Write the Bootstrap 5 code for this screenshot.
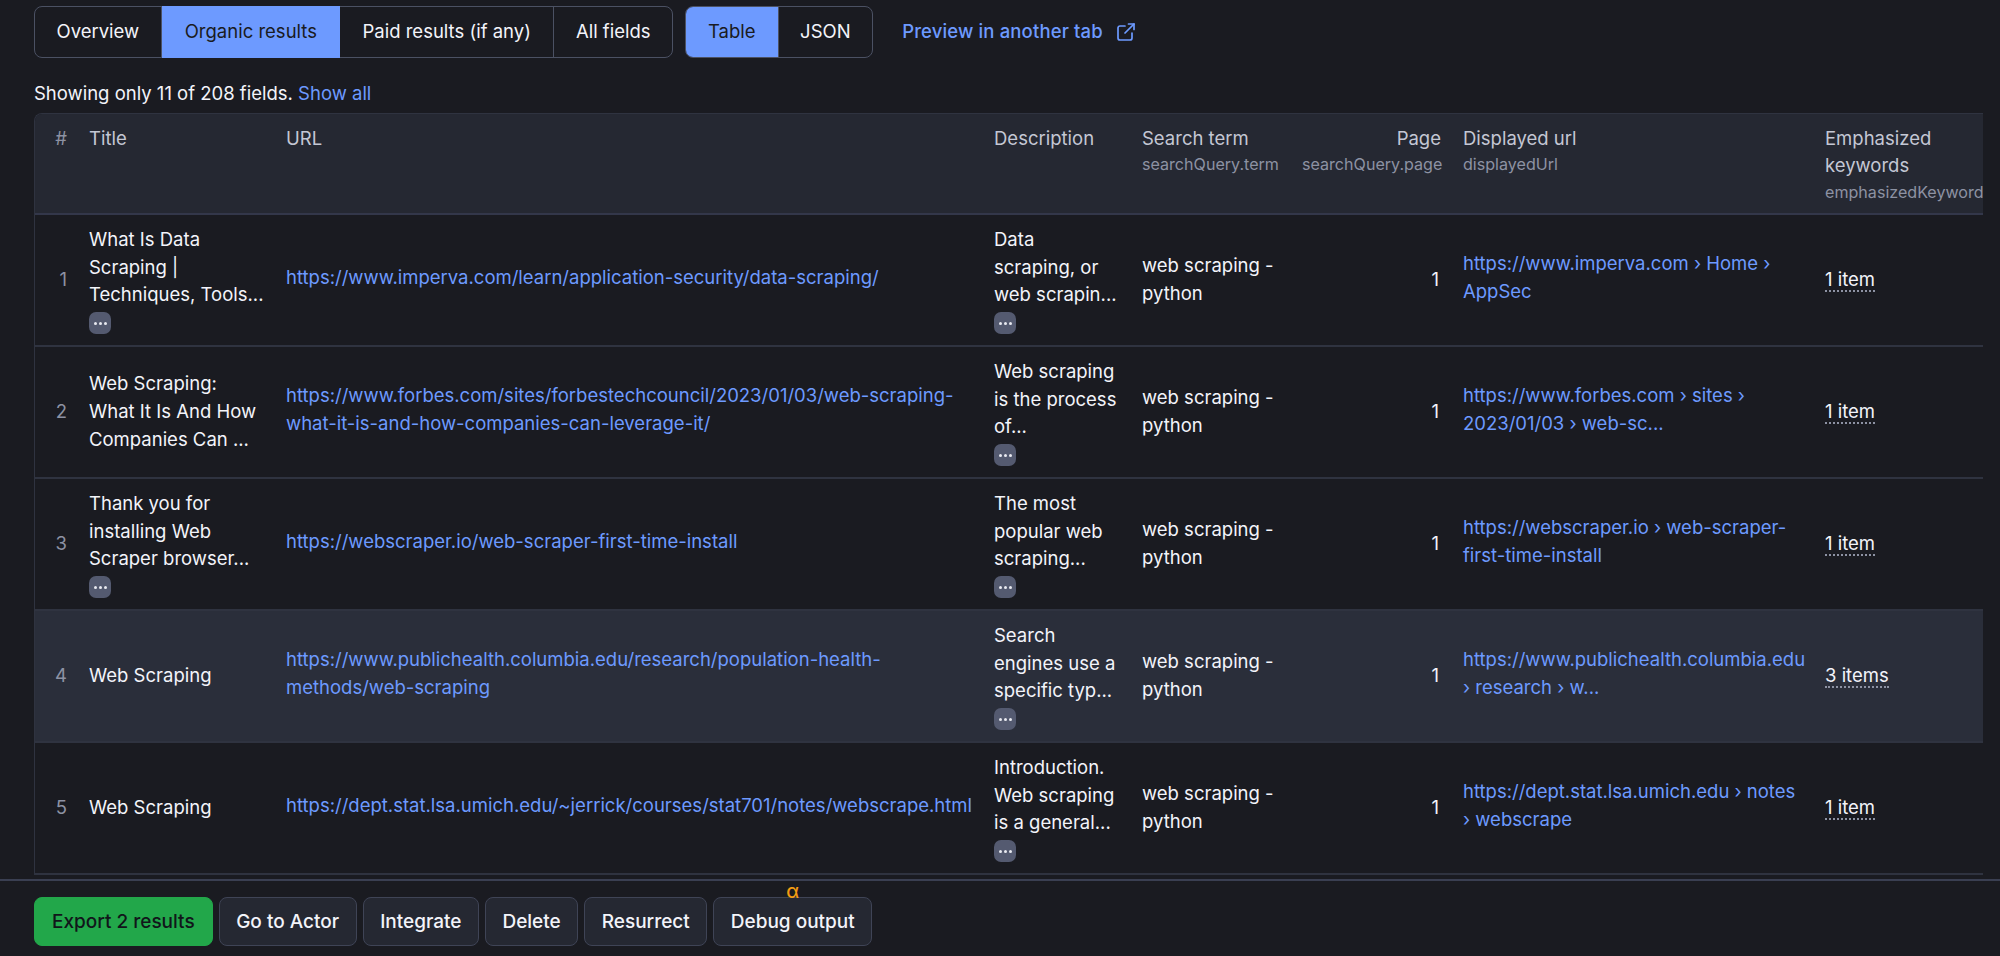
<!DOCTYPE html>
<html lang="en"><head><meta charset="utf-8"><title>Results</title>
<link rel="stylesheet" href="https://cdn.jsdelivr.net/npm/bootstrap@5.3.0/dist/css/bootstrap.min.css">
<style>
html,body{height:100%;overflow:hidden}
body{background:#1a1b21;color:#f3f4fa;font-family:Inter,"Liberation Sans",sans-serif;font-size:18.5px;line-height:27.75px}
a{color:#6d9aff;text-decoration:none}
.shell{height:956px}
.main-area{padding:6px 17px 0 34px;min-height:0}
.seg{border:1px solid #4b5163;border-radius:8px;height:52px;background:#1a1b21}
.seg-second{overflow:hidden;margin-left:12px}
.seg-btn{padding:0 21.5px;display:flex;align-items:center;border-right:1px solid #4b5163;color:#f3f4fa}
.seg-btn:last-child{border-right:0}
.seg-btn.on{background:#6d9aff;color:#1a1b21}
.seg-first .seg-btn.on{margin:-1px 0;border-right:0;padding:0 23px}
.seg-first .seg-btn:nth-child(3){padding:0 22.5px}
.seg-second .seg-btn.on{padding:0 22px}
.preview{font-weight:500;margin-left:29px;gap:14px;letter-spacing:.14px}
.fields-note{margin-top:22px;height:28px;margin-bottom:5px}
.tbl-wrap{border:1px solid #2f3340;border-bottom:0;border-right:0;border-radius:8px 0 0 0;overflow:hidden;width:1949px}
.dtable{table-layout:fixed;border-collapse:collapse;width:2200px;color:#f3f4fa}
.dtable th{background:#252832;color:#c4c7d4;font-weight:400;vertical-align:top;padding:10.5px 11px 9px;border-bottom:2px solid #33374a}
.dtable td{height:132px;vertical-align:middle;padding:10px 11px;border-bottom:2px solid #2f3340}
.dtable tr.hover td{background:#2a2e3a}
.fieldkey{display:block;font-size:16.1px;line-height:24px;color:#8d92a3;white-space:nowrap}
.idx{color:#8d92a3;text-align:right;padding-left:0!important;padding-right:11px!important}
.dtable th.idx{color:#8d92a3}
.num{text-align:right}
.dtable td.num{padding-right:13px}
.cell-link{display:block;margin-bottom:5px}
.more{display:flex;align-items:center;justify-content:center;width:22px;height:22px;border-radius:7px;background:#545a70;margin-top:3px}
.more i{display:block;width:3px;height:3px;border-radius:50%;background:#e8e9f0;margin:0 1px}
.items{border-bottom:2px dotted #8d92a3;line-height:22px;display:inline-block}
.footbar{height:77px;border-top:2px solid #3a3f52;padding:16px 34px 0;gap:6px;position:relative;background:#1a1b21;flex:none}
.acts{height:49px;padding:0 16.5px;display:flex;align-items:center;border:1px solid #3f4456;border-radius:8px;background:#252832;color:#f3f4fa;font-weight:500;font-size:19px}
.acts.go{background:#22a74a;border-color:#22a74a;color:#11161a;padding:0 17px}
.alpha-wrap{position:relative}
.alpha{position:absolute;top:-15.5px;left:50%;transform:translateX(-50%);color:#f39c12;font-size:19px;font-weight:500;line-height:20px}
</style></head>
<body>
<div class="shell d-flex flex-column">
<div class="main-area flex-grow-1 overflow-hidden">
 <div class="d-flex align-items-center">
  <div class="seg seg-first d-flex"><span class="seg-btn">Overview</span><span class="seg-btn on">Organic results</span><span class="seg-btn">Paid results (if any)</span><span class="seg-btn">All fields</span></div>
  <div class="seg d-flex seg-second"><span class="seg-btn on">Table</span><span class="seg-btn">JSON</span></div>
  <a href="#" class="preview d-flex align-items-center">Preview in another tab
   <svg width="18" height="18" viewBox="0 0 18 18" fill="none" stroke="#6d9aff" stroke-width="1.7" stroke-linecap="round" stroke-linejoin="round"><path d="M8 3H3a2 2 0 0 0-2 2v10a2 2 0 0 0 2 2h10a2 2 0 0 0 2-2v-5"/><path d="M11.500 1H17V6.500"/><path d="M17 1 8 10"/></svg></a>
 </div>
 <div class="fields-note">Showing only 11 of 208 fields. <a href="#">Show all</a></div>
 <div class="tbl-wrap">
 <table class="dtable">
 <colgroup><col style="width:43px"><col style="width:197px"><col style="width:708px"><col style="width:148px"><col style="width:160px"><col style="width:161px"><col style="width:362px"><col style="width:421px"></colgroup>
 <thead><tr><th class="idx">#</th><th>Title</th><th>URL</th><th>Description</th><th>Search term<span class="fieldkey">searchQuery.term</span></th><th class="num">Page<span class="fieldkey">searchQuery.page</span></th><th>Displayed url<span class="fieldkey">displayedUrl</span></th><th>Emphasized<br>keywords<span class="fieldkey">emphasizedKeywords</span></th></tr></thead>
 <tbody>
 <tr><td class="idx">1</td><td>What Is Data Scraping | Techniques, Tools...<span class="more"><i></i><i></i><i></i></span></td><td><a class="cell-link" href="#">https://www.imperva.com/learn/application-security/data-scraping/</a></td><td>Data scraping, or web scrapin...<span class="more"><i></i><i></i><i></i></span></td><td>web scraping - python</td><td class="num">1</td><td><a class="cell-link" href="#">https://www.imperva.com › Home › AppSec</a></td><td><span class="items">1 item</span></td></tr>
 <tr><td class="idx">2</td><td>Web Scraping: What It Is And How Companies Can ...</td><td><a class="cell-link" href="#">https://www.forbes.com/sites/forbestechcouncil/2023/01/03/web-scraping-what-it-is-and-how-companies-can-leverage-it/</a></td><td>Web scraping is the process of...<span class="more"><i></i><i></i><i></i></span></td><td>web scraping - python</td><td class="num">1</td><td><a class="cell-link" href="#">https://www.forbes.com › sites › 2023/01/03 › web-sc...</a></td><td><span class="items">1 item</span></td></tr>
 <tr><td class="idx">3</td><td>Thank you for installing Web Scraper browser...<span class="more"><i></i><i></i><i></i></span></td><td><a class="cell-link" href="#">https://webscraper.io/web-scraper-first-time-install</a></td><td>The most popular web scraping...<span class="more"><i></i><i></i><i></i></span></td><td>web scraping - python</td><td class="num">1</td><td><a class="cell-link" href="#">https://webscraper.io › web-scraper-first-time-install</a></td><td><span class="items">1 item</span></td></tr>
 <tr class="hover"><td class="idx">4</td><td>Web Scraping</td><td><a class="cell-link" href="#">https://www.publichealth.columbia.edu/research/population-health-methods/web-scraping</a></td><td>Search engines use a specific typ...<span class="more"><i></i><i></i><i></i></span></td><td>web scraping - python</td><td class="num">1</td><td><a class="cell-link" href="#">https://www.publichealth.columbia.edu › research › w...</a></td><td><span class="items">3 items</span></td></tr>
 <tr><td class="idx">5</td><td>Web Scraping</td><td><a class="cell-link" href="#">https://dept.stat.lsa.umich.edu/~jerrick/courses/stat701/notes/webscrape.html</a></td><td>Introduction. Web scraping is a general...<span class="more"><i></i><i></i><i></i></span></td><td>web scraping - python</td><td class="num">1</td><td><a class="cell-link" href="#">https://dept.stat.lsa.umich.edu › notes › webscrape</a></td><td><span class="items">1 item</span></td></tr>
 </tbody></table>
 </div>
</div>
<div class="footbar d-flex align-items-start">
 <button class="acts go">Export 2 results</button><button class="acts">Go to Actor</button><button class="acts">Integrate</button><button class="acts">Delete</button><button class="acts">Resurrect</button><div class="alpha-wrap"><span class="alpha">α</span><button class="acts">Debug output</button></div>
</div>
</div>
</body></html>
